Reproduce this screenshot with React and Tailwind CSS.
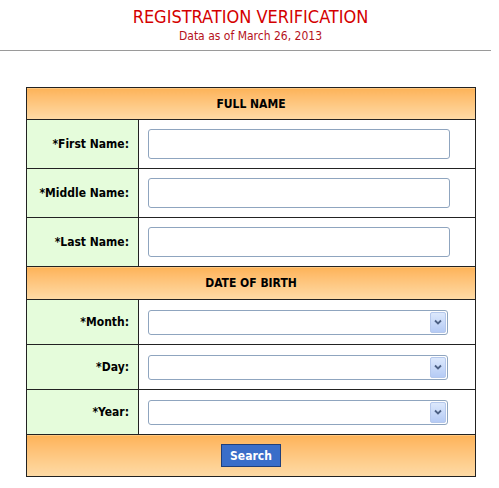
export default function App() {
  const font = { fontFamily: '"DejaVu Sans Condensed", "Liberation Sans", sans-serif' };
  const nameRows = ["*First Name:", "*Middle Name:", "*Last Name:"];
  const dateRows = ["*Month:", "*Day:", "*Year:"];

  return (
    <div className="w-[499px] h-[488px] bg-white" style={font}>
      <div className="flex flex-col items-center pt-[6px] w-[501px]">
        <h1 className="text-[18px] leading-[21px] text-[#d40000]">REGISTRATION VERIFICATION</h1>
        <p className="mt-[2px] text-[12px] leading-[14px] text-[#b5121b]">Data as of March 26, 2013</p>
      </div>
      <div className="mt-[7px] w-[491px] h-px bg-[#9a9a9a]" />

      <table className="ml-[26px] mt-[36px] w-[450px] border-collapse border border-[#222] text-[12px]">
        <tbody>
          <tr>
            <td colSpan={2} className="h-[32px] border border-[#222] bg-gradient-to-b from-[#fdb358] to-[#fedba6] text-center font-bold text-black">
              FULL NAME
            </td>
          </tr>
          {nameRows.map((label) => (
            <tr key={label}>
              <td className="w-[112px] h-[49px] border border-[#222] bg-[#e5fcdb] pr-[9px] text-right font-bold text-black">
                {label}
              </td>
              <td className="border border-[#222] pl-[9px]">
                <div className="w-[302px] h-[30px] rounded-[3px] border border-[#8fa5bf] bg-white" />
              </td>
            </tr>
          ))}
          <tr>
            <td colSpan={2} className="h-[33px] border border-[#222] bg-gradient-to-b from-[#fdb358] to-[#fedba6] text-center font-bold text-black">
              DATE OF BIRTH
            </td>
          </tr>
          {dateRows.map((label) => (
            <tr key={label}>
              <td className="w-[112px] h-[45px] border border-[#222] bg-[#e5fcdb] pr-[9px] text-right font-bold text-black">
                {label}
              </td>
              <td className="border border-[#222] pl-[9px]">
                <div className="w-[300px] h-[25px] rounded-[3px] border border-[#8fa5bf] bg-white flex items-center justify-end pr-px">
                  <div className="w-[16px] h-[21px] rounded-[2px] bg-gradient-to-b from-[#dce8fc] to-[#b5cbf5] border border-[#b5c8ec] flex items-center justify-center">
                    <svg width="8" height="6" viewBox="0 0 8 6">
                      <path d="M1 1.5 L4 4.5 L7 1.5" fill="none" stroke="#4d6185" strokeWidth="1.8" />
                    </svg>
                  </div>
                </div>
              </td>
            </tr>
          ))}
          <tr>
            <td colSpan={2} className="h-[42px] border border-[#222] bg-gradient-to-b from-[#fdb358] to-[#fedba6]">
              <div className="flex justify-center">
                <button className="w-[60px] h-[23px] border border-[#1f3f7a] bg-[#3a6ec9] text-white font-bold text-[12px]">
                  Search
                </button>
              </div>
            </td>
          </tr>
        </tbody>
      </table>
    </div>
  );
}
